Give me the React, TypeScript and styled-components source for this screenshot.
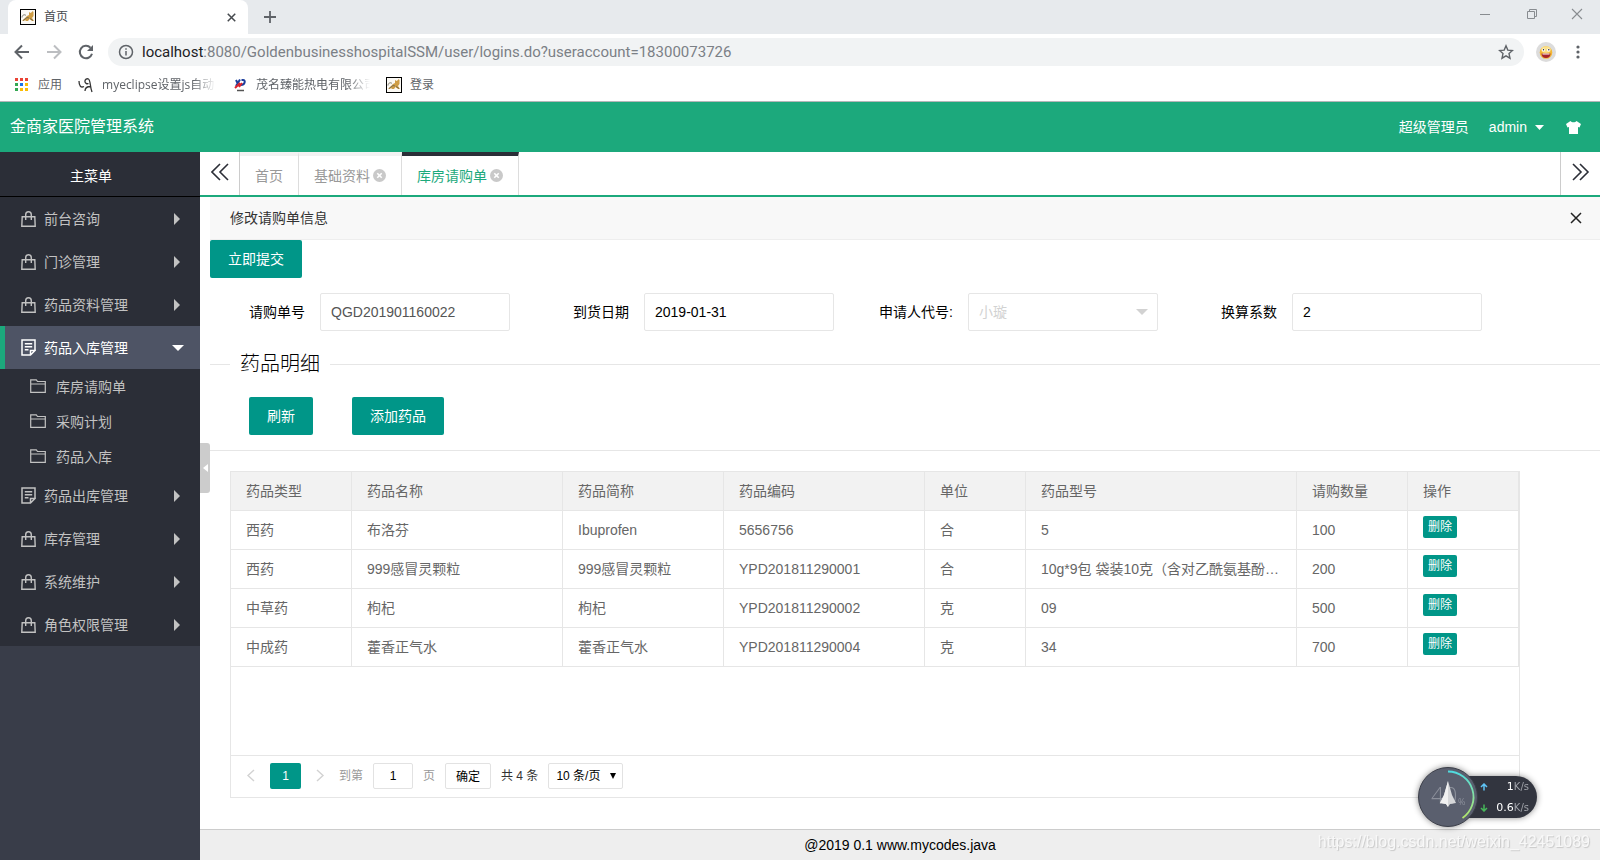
import React from 'react';
import styled, { createGlobalStyle, css } from 'styled-components';

const GREEN = '#1ca97c';
const TEAL = '#009688';
const DARK = '#2b2e37';
const LINE = '#e6e6e6';

const GlobalStyle = createGlobalStyle`
  * { box-sizing: border-box; }
  html, body, #root { height: 100%; }
  body {
    margin: 0;
    background: #fff;
    color: #000;
    font: 14px/24px "Liberation Sans", "Noto Sans CJK SC", sans-serif;
  }
  a { color: inherit; text-decoration: none; }
  ul { list-style: none; margin: 0; padding: 0; }
  button, input, select { font-family: inherit; }
  button { padding: 0; border: 0; background: none; color: inherit; cursor: pointer; }
  svg { display: block; flex: none; }
`;

/* ---------- browser frame ---------- */

const Page = styled.div`
  display: flex;
  flex-direction: column;
  min-height: 100vh;
`;

const Browser = styled.header`
  border-bottom: 1px solid #b4b6b8;
  color: #5f6368;
  font-family: "Open Sans", "Noto Sans CJK SC", sans-serif;
`;

const TabStrip = styled.div`
  display: flex;
  align-items: center;
  height: 34px;
  padding-left: 8px;
  background: #e7eaed;
`;

const BrowserTab = styled.div`
  display: flex;
  align-items: center;
  gap: 8px;
  width: 240px;
  height: 34px;
  padding: 0 12px;
  border-radius: 8px 8px 0 0;
  background: #fff;
  color: #45494d;
  font-size: 12px;
`;

const TabTitle = styled.span`
  flex: 1;
`;

const NewTab = styled.button`
  margin-left: 15px;
`;

const WindowButtons = styled.div`
  display: flex;
  gap: 31px;
  margin: 0 17px 6px auto;
`;

const Toolbar = styled.div`
  display: flex;
  align-items: center;
  height: 36px;
  padding: 0 14px;
`;

const NavButtons = styled.div`
  display: flex;
  gap: 16px;
  margin-right: 14px;
`;

const Omnibox = styled.form`
  display: flex;
  flex: 1;
  align-items: center;
  gap: 8px;
  height: 28px;
  padding: 0 10px;
  border-radius: 14px;
  background: #f1f3f4;
`;

const Url = styled.div`
  flex: 1;
  color: #7b8086;
  font: 15px/28px Roboto, sans-serif;
  white-space: nowrap;
`;

const Host = styled.span`
  color: #202124;
`;

const Avatar = styled.button`
  margin: 0 14px 0 12px;
`;

const Bookmarks = styled.nav`
  display: flex;
  align-items: center;
  height: 31px;
  padding: 0 14px 2px;
  font-size: 12px;
`;

const Bookmark = styled.a`
  display: flex;
  align-items: center;
  gap: 8px;
  margin-right: 16px;
`;

const BookmarkText = styled.span<{ $fade?: boolean }>`
  white-space: nowrap;
  ${({ $fade }) => $fade && css`
    width: 114px;
    mask-image: linear-gradient(to right, #000 80%, transparent);
  `}
`;

/* ---------- application shell ---------- */

const TopBar = styled.div`
  display: flex;
  align-items: center;
  height: 50px;
  padding: 0 19px 0 10px;
  background: ${GREEN};
  color: #fff;
`;

const Brand = styled.h1`
  flex: 1;
  margin: 0;
  font-size: 16px;
  font-weight: 400;
`;

const UserLinks = styled.div`
  display: flex;
  align-items: center;
  gap: 20px;
`;

const UserMenu = styled.button`
  display: flex;
  align-items: center;
  gap: 8px;
  margin-right: 2px;
  font-size: 14px;
`;

const Shell = styled.div`
  display: flex;
  flex: 1;
`;

const Sidebar = styled.nav`
  flex: none;
  width: 200px;
  background: #393d49;
`;

const MenuTitle = styled.h2`
  height: 45px;
  margin: 0;
  padding-right: 18px;
  border-bottom: 1px solid #000;
  background: ${DARK};
  color: #fff;
  font-size: 14px;
  font-weight: 400;
  line-height: 48px;
  text-align: center;
`;

const Menu = styled.ul`
  background: ${DARK};
`;

const MenuLink = styled.a<{ $open?: boolean }>`
  display: flex;
  align-items: center;
  gap: 8px;
  height: 43px;
  padding: 0 16px;
  border-left: 5px solid ${({ $open }) => ($open ? GREEN : 'transparent')};
  background: ${({ $open }) => ($open ? '#4e5465' : 'transparent')};
  color: ${({ $open }) => ($open ? '#fff' : '#c2c2c2')};
`;

const MenuText = styled.span`
  flex: 1;
`;

const SubLink = styled.a`
  display: flex;
  align-items: center;
  gap: 10px;
  height: 35px;
  padding-left: 30px;
  color: #c2c2c2;
`;

const Main = styled.div`
  position: relative;
  display: flex;
  flex: 1;
  flex-direction: column;
  min-width: 0;
`;

const CollapseHandle = styled.button`
  position: absolute;
  top: 291px;
  left: 0;
  display: flex;
  align-items: center;
  justify-content: center;
  width: 10px;
  height: 50px;
  border-radius: 0 3px 3px 0;
  background: #ccc;
`;

const PageTabs = styled.div`
  display: flex;
  height: 45px;
  border-bottom: 2px solid ${GREEN};
`;

const ScrollButton = styled.button<{ $side: 'left' | 'right' }>`
  display: flex;
  justify-content: center;
  width: 40px;
  padding-top: 11px;
  ${({ $side }) =>
    $side === 'left'
      ? css`border-right: 1px solid #ccc;`
      : css`margin-left: auto; border-left: 1px solid #ccc;`}
`;

const PageTab = styled.a<{ $active?: boolean }>`
  display: flex;
  align-items: center;
  gap: 3px;
  padding: 0 15px;
  border-top: 4px solid ${({ $active }) => ($active ? DARK : '#f2f2f2')};
  border-right: 1px solid #ddd;
  color: ${({ $active }) => ($active ? GREEN : '#999')};
`;

const Content = styled.main`
  flex: 1;
  padding-left: 10px;
`;

const Heading = styled.div`
  display: flex;
  align-items: center;
  justify-content: space-between;
  height: 43px;
  padding: 0 18px 0 20px;
  border-bottom: 1px solid #eee;
  background: #f8f8f8;
  color: #333;
`;

const Button = styled.button`
  height: 38px;
  padding: 0 18px;
  border-radius: 2px;
  background: ${TEAL};
  color: #fff;
  font-size: 14px;
  line-height: 38px;
`;

const SmallButton = styled(Button)`
  display: block;
  height: 22px;
  margin-bottom: 6px;
  padding: 0 5px;
  font-size: 12px;
  line-height: 22px;
`;

const Fields = styled.div`
  display: flex;
  gap: 24px;
  padding: 15px 0;
`;

const Field = styled.div`
  display: flex;
  position: relative;
`;

const Label = styled.label`
  width: 110px;
  padding: 0 15px;
  line-height: 38px;
  text-align: right;
  white-space: nowrap;
`;

const fieldBox = css`
  width: 190px;
  height: 38px;
  padding: 0 10px;
  border: 1px solid ${LINE};
  border-radius: 2px;
  background: #fff;
  font-size: 14px;
`;

const TextInput = styled.input<{ $muted?: boolean }>`
  ${fieldBox}
  color: ${({ $muted }) => ($muted ? '#555' : '#000')};
`;

const SelectInput = styled.select`
  ${fieldBox}
  appearance: none;
  color: #d2d2d2;
  opacity: 1;
`;

const SelectArrow = styled.svg<{ $right: number }>`
  position: absolute;
  top: calc(50% - 3px);
  right: ${({ $right }) => $right}px;
  pointer-events: none;
`;

const Details = styled.fieldset`
  min-width: 0;
  margin: 4px 0 0;
  padding: 0;
  border: 0;
  border-top: 1px solid ${LINE};
`;

const Legend = styled.legend`
  margin-left: 20px;
  padding: 0 10px;
  font-size: 20px;
  font-weight: 300;
  line-height: 28px;
`;

const Actions = styled.div`
  display: flex;
  gap: 39px;
  padding: 19px 39px 15px;
  border-bottom: 1px solid ${LINE};
`;

const Grid = styled.section`
  width: 1290px;
  max-width: calc(100% - 20px);
  margin: 20px 0 0 20px;
  border: 1px solid ${LINE};
`;

const GridBody = styled.div`
  min-height: 283px;
  overflow-x: auto;
`;

const Table = styled.table`
  width: 1288px;
  border-collapse: separate;
  border-spacing: 0;
  table-layout: fixed;
  color: #666;
`;

const HeadCell = styled.th`
  height: 39px;
  padding: 0 15px;
  border: solid ${LINE};
  border-width: 0 1px 1px 0;
  background: #f2f2f2;
  font-weight: 400;
  text-align: left;
`;

const Cell = styled.td`
  height: 39px;
  padding: 0 15px;
  overflow: hidden;
  border: solid ${LINE};
  border-width: 0 1px 1px 0;
  text-overflow: ellipsis;
  white-space: nowrap;
`;

const Pager = styled.div`
  display: flex;
  align-items: center;
  gap: 10px;
  height: 42px;
  padding: 0 15px 2px;
  border-top: 1px solid ${LINE};
  color: #999;
  font-size: 12px;
`;

const PageArrows = styled.div`
  display: flex;
  align-items: center;
  gap: 14px;
  margin-right: 4px;
`;

const CurrentPage = styled.button`
  width: 31px;
  height: 26px;
  border-radius: 2px;
  background: ${TEAL};
  color: #fff;
  font-size: 12px;
`;

const pagerBox = css`
  height: 26px;
  border: 1px solid #e2e2e2;
  border-radius: 2px;
  background: #fff;
  color: #000;
  font-size: 12px;
`;

const PageInput = styled.input`
  ${pagerBox}
  width: 40px;
  text-align: center;
`;

const PageGo = styled.button`
  ${pagerBox}
  width: 46px;
`;

const PageSize = styled.span`
  display: flex;
  position: relative;
`;

const PageSizeSelect = styled.select`
  ${pagerBox}
  width: 75px;
  padding: 0 7px;
  appearance: none;
`;

const Total = styled.span`
  color: #333;
`;

const Footer = styled.footer`
  height: 31px;
  border-top: 1px solid #ccc;
  background: #eee;
  line-height: 30px;
  text-align: center;
`;

/* ---------- overlays ---------- */

const Monitor = styled.aside`
  position: fixed;
  right: 63px;
  bottom: 33px;
  display: flex;
  align-items: center;
  filter: drop-shadow(0 0 3px rgba(0, 0, 0, 0.45));
`;

const Speeds = styled.div`
  display: flex;
  flex-direction: column;
  justify-content: center;
  width: 80px;
  height: 42px;
  margin-left: -21px;
  padding: 0 8px 0 23px;
  border-radius: 0 21px 21px 0;
  background: #32353f;
  color: #fff;
  font: 11px/21px "DejaVu Sans", sans-serif;
`;

const Speed = styled.div`
  display: flex;
  align-items: center;
  justify-content: space-between;
`;

const Unit = styled.span`
  color: #a0a3aa;
  font-size: 10px;
`;

const Gauge = styled.svg`
  position: relative;
  z-index: 1;
`;

const Watermark = styled.div`
  position: fixed;
  right: 10px;
  bottom: 6px;
  color: #f8f8f8;
  font-size: 16px;
  text-shadow: 1px 1px 1px #c8c8c8;
`;

/* ---------- icons ---------- */

const CatIcon = () => (
  <svg width="16" height="16" viewBox="0 0 16 16">
    <rect x=".5" y=".5" width="15" height="15" fill="#fbf9f4" stroke="#000" />
    <path d="M2 12l2.500-2.500L7 7l2-1V3l1.500 1L12 3l.5-1 1 1v4l-1.500 2 2 3h-2l-2.500-2L8 12H6l-1-1-1 1z" fill="#cf9d45" />
    <path d="M2 8.500C2 6 4.500 5 6 6.500M3 11.500l4-3 2 .5M10 9.500l3 2" fill="none" stroke="#67624f" strokeWidth=".8" />
  </svg>
);

const Cross = ({ size, width = 1.5, color = 'currentColor' }: { size: number; width?: number; color?: string }) => (
  <svg width={size} height={size} viewBox="0 0 12 12" fill="none" stroke={color} strokeWidth={width}>
    <path d="M1 1l10 10M11 1L1 11" />
  </svg>
);

const CloseDot = () => (
  <svg width="13" height="13" viewBox="0 0 14 14">
    <circle cx="7" cy="7" r="7" fill="#c9c9c9" />
    <path d="M4.600 4.600l4.800 4.800M9.400 4.600L4.600 9.400" stroke="#fff" strokeWidth="1.700" />
  </svg>
);

const Chevrons = ({ flip }: { flip?: boolean }) => (
  <svg width="18" height="18" viewBox="0 0 18 18" fill="none" stroke={DARK} strokeWidth="1.600">
    <path d={flip ? 'M1 1l8 8-8 8M8 1l8 8-8 8' : 'M9 1L1 9l8 8M17 1L9 9l8 8'} />
  </svg>
);

const BagIcon = () => (
  <svg width="15" height="16" viewBox="0 0 15 16" fill="none" stroke="currentColor" strokeWidth="1.400">
    <path d="M1.200 5.700h12.600l.4 9.500H.8zM4.700 9V3.800a2.800 3 0 015.600 0V9" />
  </svg>
);

const NoteIcon = () => (
  <svg width="15" height="17" viewBox="0 0 15 17" fill="none" stroke="currentColor" strokeWidth="1.500">
    <path d="M14 11V1H1v15h8.500L14 11.500H9.500V16M3.800 4.800h7.400M3.800 7.800h7.400M3.800 10.800h3.700" />
  </svg>
);

const FolderIcon = () => (
  <svg width="16" height="16" viewBox="0 0 16 16" fill="none" stroke="currentColor" strokeWidth="1.200">
    <path d="M.7 13.300V.8h5.600l1.200 1.700h7.800v10.800zM.7 5h14.600" />
  </svg>
);

const Triangle = ({ down }: { down?: boolean }) =>
  down ? (
    <svg width="12" height="6" viewBox="0 0 12 6"><path d="M0 0h12L6 6z" fill="currentColor" /></svg>
  ) : (
    <svg width="10" height="12" viewBox="0 0 10 12"><path d="M0 0l6 6-6 6z" fill="currentColor" /></svg>
  );

const PagerArrow = ({ next }: { next?: boolean }) => (
  <svg width="10" height="13" viewBox="0 0 10 13" fill="none" stroke="#d2d2d2" strokeWidth="1.400">
    <path d={next ? 'M2 1l6 5.500L2 12' : 'M8 1L2 6.500 8 12'} />
  </svg>
);

const AppsIcon = () => {
  const colors = ['#ea4335', '#ea4335', '#ea4335', '#34a853', '#1a73e8', '#fbbc04', '#34a853', '#fbbc04', '#fbbc04'];
  return (
    <svg width="16" height="16" viewBox="0 0 16 16">
      {colors.map((c, i) => (
        <rect key={i} x={1 + (i % 3) * 5} y={1 + Math.floor(i / 3) * 5} width="3" height="3" fill={c} />
      ))}
    </svg>
  );
};

/* ---------- data ---------- */

const menu = [
  { name: '前台咨询' },
  { name: '门诊管理' },
  { name: '药品资料管理' },
  { name: '药品入库管理', note: true, children: ['库房请购单', '采购计划', '药品入库'] },
  { name: '药品出库管理', note: true },
  { name: '库存管理' },
  { name: '系统维护' },
  { name: '角色权限管理' },
];

const columns: [string, number][] = [
  ['药品类型', 121],
  ['药品名称', 211],
  ['药品简称', 161],
  ['药品编码', 201],
  ['单位', 101],
  ['药品型号', 271],
  ['请购数量', 111],
  ['操作', 111],
];

const rows = [
  ['西药', '布洛芬', 'Ibuprofen', '5656756', '合', '5', '100'],
  ['西药', '999感冒灵颗粒', '999感冒灵颗粒', 'YPD201811290001', '合', '10g*9包 袋装10克（含对乙酰氨基酚…', '200'],
  ['中草药', '枸杞', '枸杞', 'YPD201811290002', '克', '09', '500'],
  ['中成药', '藿香正气水', '藿香正气水', 'YPD201811290004', '克', '34', '700'],
];

/* ---------- page ---------- */

const BrowserFrame = () => (
  <Browser>
    <TabStrip>
      <BrowserTab>
        <CatIcon />
        <TabTitle>首页</TabTitle>
        <button aria-label="关闭标签页"><Cross size={9} width={2} /></button>
      </BrowserTab>
      <NewTab aria-label="新标签页">
        <svg width="14" height="14" viewBox="0 0 14 14" stroke="#5f6368" strokeWidth="1.800"><path d="M7 1v12M1 7h12" /></svg>
      </NewTab>
      <WindowButtons>
        <button aria-label="最小化"><svg width="16" height="12" viewBox="0 0 16 12"><path d="M3 6.500h10" stroke="#888c90" /></svg></button>
        <button aria-label="还原">
          <svg width="16" height="12" viewBox="0 0 16 12" fill="none" stroke="#888c90"><path d="M3.500 3.500h7v7h-7zM5.500 3.500v-2h7v7h-2" /></svg>
        </button>
        <button aria-label="关闭"><Cross size={12} width={1.1} color="#888c90" /></button>
      </WindowButtons>
    </TabStrip>
    <Toolbar>
      <NavButtons>
        <button aria-label="后退">
          <svg width="16" height="16" viewBox="0 0 16 16" fill="none" stroke="#5f6368" strokeWidth="2"><path d="M15 8H2M8 1.500L1.500 8 8 14.500" /></svg>
        </button>
        <button aria-label="前进">
          <svg width="16" height="16" viewBox="0 0 16 16" fill="none" stroke="#bcbec1" strokeWidth="2"><path d="M1 8h13M8 1.500L14.500 8 8 14.500" /></svg>
        </button>
        <button aria-label="重新加载">
          <svg width="16" height="16" viewBox="0 0 16 16" fill="none" stroke="#5f6368" strokeWidth="2">
            <path d="M14 9.800A6.200 6.200 0 1112.500 3.700" /><path d="M15 1v6H9z" fill="#5f6368" stroke="none" />
          </svg>
        </button>
      </NavButtons>
      <Omnibox>
        <svg width="16" height="16" viewBox="0 0 16 16" fill="none" stroke="#5f6368" strokeWidth="1.500">
          <circle cx="8" cy="8" r="6.500" /><path d="M8 7v4.500M8 4.200v1.600" />
        </svg>
        <Url><Host>localhost</Host>:8080/GoldenbusinesshospitalSSM/user/logins.do?useraccount=18300073726</Url>
        <button type="button" aria-label="收藏">
          <svg width="16" height="16" viewBox="0 0 16 16" fill="none" stroke="#5f6368" strokeWidth="1.400">
            <path d="M8 1.800l1.800 4.300 4.700.4-3.500 3.100 1 4.600L8 11.800l-4 2.400 1-4.600L1.500 6.500l4.700-.4z" />
          </svg>
        </button>
      </Omnibox>
      <Avatar aria-label="用户">
        <svg width="20" height="20" viewBox="0 0 20 20">
          <circle cx="10" cy="10" r="10" fill="#dcdcdc" />
          <circle cx="10" cy="10.500" r="6.300" fill="#f3b735" />
          <ellipse cx="10" cy="7.500" rx="4.800" ry="3.200" fill="#fbe08a" />
          <path d="M5.500 11.500h9c0 3-2 4.500-4.500 4.500s-4.500-1.500-4.500-4.500z" fill="#a8232a" />
          <path d="M6.500 11.500h7v1h-7z" fill="#fff" />
          <circle cx="7.500" cy="8" r="1.500" fill="#fff" /><circle cx="12.500" cy="8" r="1.500" fill="#fff" />
          <circle cx="7.500" cy="7.700" r=".7" fill="#222" /><circle cx="12.800" cy="7.700" r=".7" fill="#222" />
        </svg>
      </Avatar>
      <button aria-label="菜单">
        <svg width="16" height="16" viewBox="0 0 16 16" fill="#5f6368"><circle cx="8" cy="3" r="1.600" /><circle cx="8" cy="8" r="1.600" /><circle cx="8" cy="13" r="1.600" /></svg>
      </button>
    </Toolbar>
    <Bookmarks>
      <Bookmark href="#apps"><AppsIcon /><BookmarkText>应用</BookmarkText></Bookmark>
      <Bookmark href="#eclipse">
        <svg width="16" height="16" viewBox="0 0 16 16" fill="none" stroke="#333" strokeWidth="1.300">
          <path d="M1 4c0 5 2 7 5 5.500M10.500 6.500a2.500 2.500 0 110-4.500c2 1 1.500 8 3.500 13M7 14c0-3 2.500-4.500 5.500-4.500" />
        </svg>
        <BookmarkText $fade>myeclipse设置js自动</BookmarkText>
      </Bookmark>
      <Bookmark href="#power">
        <svg width="16" height="16" viewBox="0 0 16 16" fill="none" strokeWidth="2">
          <path d="M4 3l2 4M8 2.500L4 9" stroke="#1d3f9c" /><path d="M9.500 3H11c3 0 2 5-2 5H8" stroke="#1d3f9c" /><path d="M3 11l5-5M7 10l3-4" stroke="#d8232e" /><path d="M5 13.500h7" stroke="#555" strokeWidth="1.500" />
        </svg>
        <BookmarkText $fade>茂名臻能热电有限公司</BookmarkText>
      </Bookmark>
      <Bookmark href="#login"><CatIcon /><BookmarkText>登录</BookmarkText></Bookmark>
    </Bookmarks>
  </Browser>
);

const SideMenu = () => (
  <Sidebar>
    <MenuTitle>主菜单</MenuTitle>
    <Menu>
      {menu.map((m) => (
        <li key={m.name}>
          <MenuLink href="#menu" $open={!!m.children}>
            {m.note ? <NoteIcon /> : <BagIcon />}
            <MenuText>{m.name}</MenuText>
            <Triangle down={!!m.children} />
          </MenuLink>
          {m.children && (
            <ul>
              {m.children.map((c) => (
                <li key={c}><SubLink href="#sub"><FolderIcon />{c}</SubLink></li>
              ))}
            </ul>
          )}
        </li>
      ))}
    </Menu>
  </Sidebar>
);

const RequestForm = () => (
  <Fields>
    <Field>
      <Label htmlFor="order">请购单号</Label>
      <TextInput id="order" $muted defaultValue="QGD201901160022" />
    </Field>
    <Field>
      <Label htmlFor="date">到货日期</Label>
      <TextInput id="date" defaultValue="2019-01-31" />
    </Field>
    <Field>
      <Label htmlFor="applicant">申请人代号:</Label>
      <SelectInput id="applicant" disabled><option>小璇</option></SelectInput>
      <SelectArrow $right={10} width="12" height="6" viewBox="0 0 12 6"><path d="M0 0h12L6 6z" fill="#d2d2d2" /></SelectArrow>
    </Field>
    <Field>
      <Label htmlFor="factor">换算系数</Label>
      <TextInput id="factor" defaultValue="2" />
    </Field>
  </Fields>
);

const MedicineGrid = () => (
  <Grid>
    <GridBody>
      <Table>
        <colgroup>{columns.map(([name, width]) => <col key={name} width={width} />)}</colgroup>
        <thead>
          <tr>{columns.map(([name]) => <HeadCell key={name}>{name}</HeadCell>)}</tr>
        </thead>
        <tbody>
          {rows.map((row, i) => (
            <tr key={i}>
              {row.map((value, j) => <Cell key={j}>{value}</Cell>)}
              <Cell><SmallButton>删除</SmallButton></Cell>
            </tr>
          ))}
        </tbody>
      </Table>
    </GridBody>
    <Pager>
      <PageArrows>
        <button aria-label="上一页"><PagerArrow /></button>
        <CurrentPage>1</CurrentPage>
        <button aria-label="下一页"><PagerArrow next /></button>
      </PageArrows>
      <label htmlFor="page">到第</label>
      <PageInput id="page" defaultValue="1" />
      <span>页</span>
      <PageGo>确定</PageGo>
      <Total>共 4 条</Total>
      <PageSize>
        <PageSizeSelect aria-label="每页条数"><option>10 条/页</option></PageSizeSelect>
        <SelectArrow $right={7} width="6" height="6" viewBox="0 0 6 6"><path d="M0 0h6L3 6z" fill="#000" /></SelectArrow>
      </PageSize>
    </Pager>
  </Grid>
);

const SpeedMonitor = () => (
  <Monitor>
    <Gauge width="60" height="60" viewBox="0 0 60 60">
      <defs>
        <linearGradient id="arc" x1="0" y1="0" x2="0" y2="1">
          <stop offset="0" stopColor="#4fdbe0" /><stop offset="1" stopColor="#b4e86a" />
        </linearGradient>
      </defs>
      <circle cx="30" cy="30" r="29.500" fill="#5a5f6e" stroke="#3b3e49" />
      <text x="13" y="37" fontSize="23" fontWeight="300" fontFamily="Open Sans" fill="#8c909b">40</text>
      <text x="40" y="38" fontSize="9" fontFamily="Open Sans" fill="#8c909b">%</text>
      <path d="M30 14l4 14 4 8-6 1-2 3-2-3-6-1 4-8z" fill="#d6d7d9" />
      <path d="M30 14v26l-2-3-6-1 4-8z" fill="#f1f1f1" />
      <path d="M30 4.500a25.500 25.500 0 0114.500 46.500" fill="none" stroke="url(#arc)" strokeWidth="1.800" />
    </Gauge>
    <Speeds>
      <Speed>
        <svg width="8" height="8" viewBox="0 0 8 8" fill="none" stroke="#5fc3f5" strokeWidth="1.500"><path d="M4 7.500V1M1 4l3-3 3 3" /></svg>
        <span>1<Unit>K/s</Unit></span>
      </Speed>
      <Speed>
        <svg width="8" height="8" viewBox="0 0 8 8" fill="none" stroke="#46b85a" strokeWidth="1.500"><path d="M4 .5V7M1 4l3 3 3-3" /></svg>
        <span>0.6<Unit>K/s</Unit></span>
      </Speed>
    </Speeds>
  </Monitor>
);

export default function App() {
  return (
    <Page>
      <GlobalStyle />
      <BrowserFrame />
      <TopBar>
        <Brand>金商家医院管理系统</Brand>
        <UserLinks>
          <a href="#role">超级管理员</a>
          <UserMenu>
            admin
            <svg width="9" height="5" viewBox="0 0 9 5"><path d="M0 0h9L4.500 5z" fill="#fff" /></svg>
          </UserMenu>
          <button aria-label="皮肤">
            <svg width="15" height="13" viewBox="0 0 15 13" fill="#fff"><path d="M4.500 0c1 1.800 5 1.800 6 0L15 3l-1.500 3.500L12 6v7H3V6l-1.500.5L0 3z" /></svg>
          </button>
        </UserLinks>
      </TopBar>
      <Shell>
        <SideMenu />
        <Main>
          <PageTabs>
            <ScrollButton $side="left" aria-label="向左"><Chevrons /></ScrollButton>
            <PageTab href="#home">首页</PageTab>
            <PageTab href="#base">基础资料<CloseDot /></PageTab>
            <PageTab href="#request" $active>库房请购单<CloseDot /></PageTab>
            <ScrollButton $side="right" aria-label="向右"><Chevrons flip /></ScrollButton>
          </PageTabs>
          <Content>
            <Heading>
              <span>修改请购单信息</span>
              <button aria-label="关闭"><Cross size={12} color="#222" /></button>
            </Heading>
            <Button>立即提交</Button>
            <RequestForm />
            <Details>
              <Legend>药品明细</Legend>
              <Actions>
                <Button>刷新</Button>
                <Button>添加药品</Button>
              </Actions>
              <MedicineGrid />
            </Details>
          </Content>
          <CollapseHandle aria-label="收起菜单">
            <svg width="5" height="8" viewBox="0 0 5 8"><path d="M5 0v8L0 4z" fill="#fff" /></svg>
          </CollapseHandle>
          <Footer>@2019 0.1 www.mycodes.java</Footer>
        </Main>
      </Shell>
      <SpeedMonitor />
      <Watermark>https://blog.csdn.net/weixin_42451089</Watermark>
    </Page>
  );
}
